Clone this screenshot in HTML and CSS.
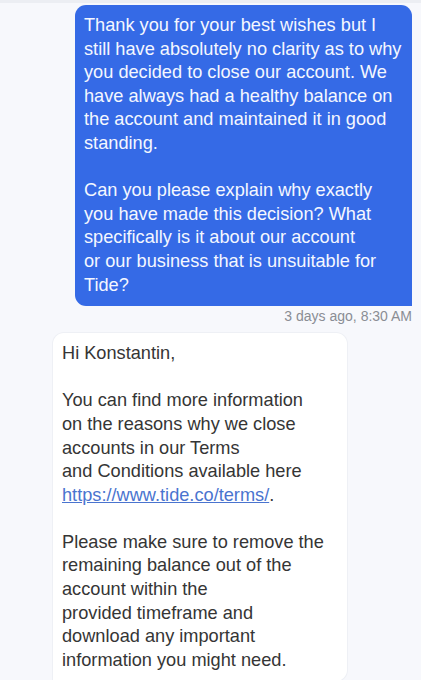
FILE: index.html
```html
<!DOCTYPE html>
<html>
<head>
<meta charset="utf-8">
<link rel="stylesheet" href="styles.css">
</head>
<body>
<div class="topbar"></div>
<main class="chat">
  <div class="msg msg-out">
    <p>Thank you for your best wishes but I<br>still have absolutely no clarity as to why<br>you decided to close our account. We<br>have always had a healthy balance on<br>the account and maintained it in good<br>standing.</p>
    <p>Can you please explain why exactly<br>you have made this decision? What<br>specifically is it about our account<br>or our business that is unsuitable for<br>Tide?</p>
  </div>
  <div class="time">3 days ago, 8:30 AM</div>
  <div class="msg msg-in">
    <p>Hi Konstantin,</p>
    <p>You can find more information<br>on the reasons why we close<br>accounts in our Terms<br>and Conditions available here<br><a class="link" href="#">https://www.tide.co/terms/</a>.</p>
    <p>Please make sure to remove the<br>remaining balance out of the<br>account within the<br>provided timeframe and<br>download any important<br>information you might need.</p>
  </div>
</main>
</body>
</html>
```
FILE: styles.css
```css
html, body {
  margin: 0;
  padding: 0;
  background: #f7f8fc;
  height: 100%;
  overflow: hidden;
}
body {
  font-family: "Liberation Sans", Arial, sans-serif;
}
.topbar {
  height: 3px;
  background: #eceef3;
}
.chat {
  display: flex;
  flex-direction: column;
  padding: 2px 9px 0 53px;
}
.msg {
  box-sizing: border-box;
  padding: 9px;
  font-size: 18.2px;
  line-height: 23.6px;
}
.msg p {
  margin: 0;
  white-space: nowrap;
}
.msg p + p {
  margin-top: 23.6px;
}
.msg-out {
  align-self: flex-end;
  width: 337px;
  background: #356ae6;
  color: #f4f7ff;
  border-radius: 11px 11px 0 11px;
}
.time {
  align-self: flex-end;
  margin-top: 1px;
  font-size: 14px;
  line-height: 18px;
  color: #8a8d94;
}
.msg-in {
  align-self: flex-start;
  width: 294px;
  margin-top: 8px;
  background: #ffffff;
  color: #353535;
  border-radius: 11px 11px 11px 0;
  box-shadow: 0 0 0 1px #eef0f5;
}
.link {
  color: #4a74cf;
  text-decoration: underline;
}
```
